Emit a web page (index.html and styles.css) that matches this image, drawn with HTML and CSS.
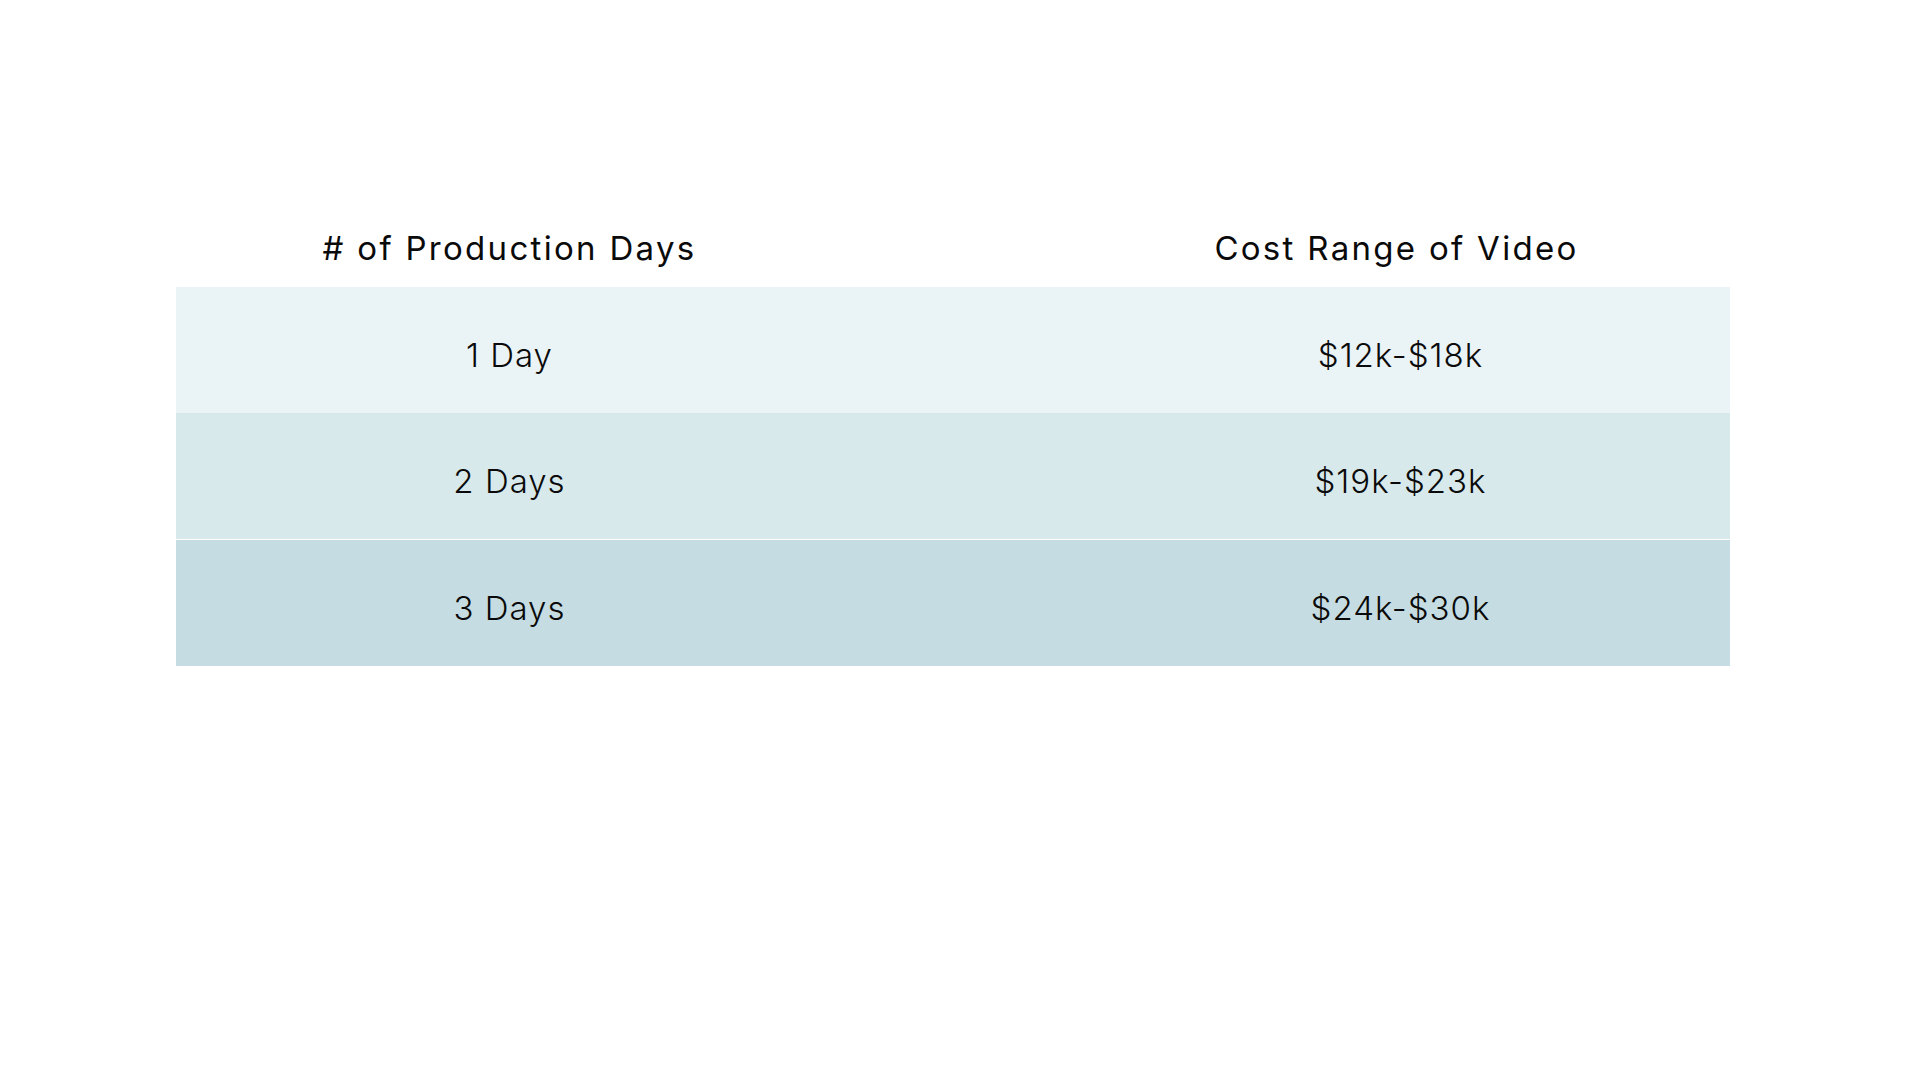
FILE: index.html
```html
<!DOCTYPE html>
<html lang="en">
<head>
<meta charset="utf-8">
<title>Production Days Cost Table</title>
<link rel="stylesheet" href="styles.css">
</head>
<body>
<main class="page">
  <section class="table">
    <div class="row head">
      <div class="cell"># of Production Days</div>
      <div class="cell">Cost Range of Video</div>
    </div>
    <div class="row body r1">
      <div class="cell">1 Day</div>
      <div class="cell">$12k-$18k</div>
    </div>
    <div class="row body r2">
      <div class="cell">2 Days</div>
      <div class="cell">$19k-$23k</div>
    </div>
    <div class="row body r3">
      <div class="cell">3 Days</div>
      <div class="cell">$24k-$30k</div>
    </div>
  </section>
</main>
</body>
</html>
```

FILE: styles.css
```css
html, body {
  margin: 0;
  padding: 0;
  background: #ffffff;
}

body {
  width: 1920px;
  height: 1080px;
  font-family: Inter, "Noto Sans", "Liberation Sans", sans-serif;
  color: #0a0a0a;
}

.page {
  padding: 213px 190px 0 176px;
}

.table {
  width: 1554px;
  display: flex;
  flex-direction: column;
}

.row {
  display: grid;
  grid-template-columns: 1fr 1fr;
  column-gap: 220px;
  align-items: center;
  box-sizing: border-box;
}

.cell {
  text-align: center;
  white-space: nowrap;
}

.head {
  height: 74px;
  padding-bottom: 3px;
  font-size: 33px;
  font-weight: 400;
  letter-spacing: 2.3px;
  line-height: 1;
}

.body {
  height: 126px;
  padding-top: 10px;
  font-size: 33px;
  font-weight: 300;
  letter-spacing: 1px;
  line-height: 1;
}

.body .cell + .cell {
  padding-left: 8px;
}

.r1 { background: #eaf3f5; }
.r2 { background: #d8e9ec; }
.r3 {
  background: #c5dde2;
  margin-top: 1px;
}
```
